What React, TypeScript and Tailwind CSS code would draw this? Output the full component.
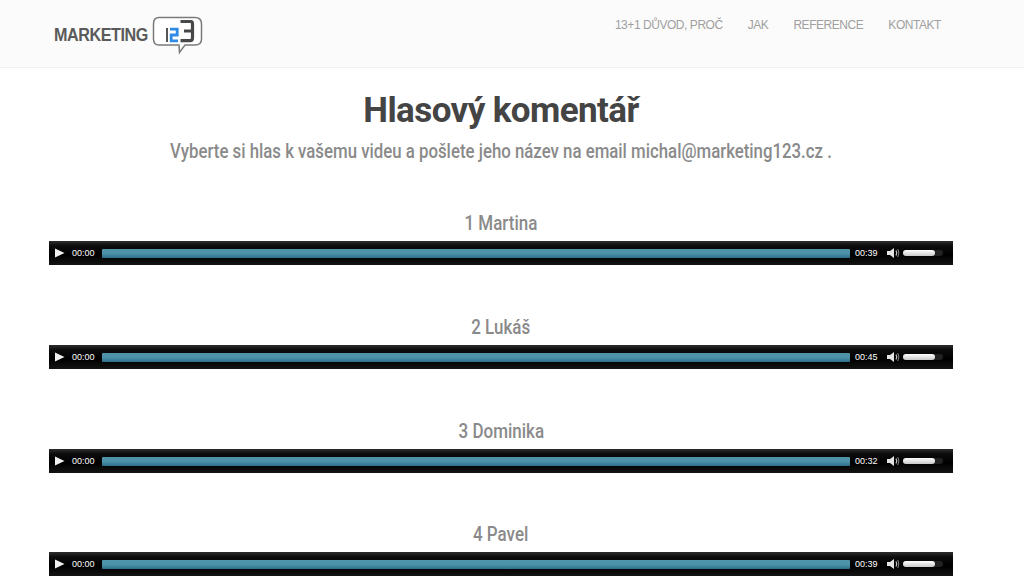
const tracks = [
  { name: "1 Martina", time: "00:39", mt: "mt-0" },
  { name: "2 Lukáš", time: "00:45", mt: "mt-[47px]" },
  { name: "3 Dominika", time: "00:32", mt: "mt-[47px]" },
  { name: "4 Pavel", time: "00:39", mt: "mt-[46px]" },
];

function Player({ time }: { time: string }) {
  return (
    <div className="flex h-6 w-[904px] items-center bg-[linear-gradient(#2e2e2e,#0c0c0c_20%,#000_60%,#141414)] font-['Liberation_Sans',sans-serif] text-[9px] text-white">
      <svg width="10" height="10" viewBox="0 0 10 10" className="ml-[6px]">
        <path d="M0 0.5 L9.5 5 L0 9.5 Z" fill="#f0f0f0" />
      </svg>
      <span className="ml-[7px] mt-px w-[23px]">00:00</span>
      <div className="ml-[7px] h-[9px] w-[748px] rounded-[1px] bg-[linear-gradient(#4f95a9,#4a92a8_50%,#2f7088)]" />
      <span className="ml-[5px] mt-px w-[23px]">{time}</span>
      <svg width="14" height="12" viewBox="0 0 14 12" className="ml-[9px]">
        <path d="M0 4 H3 L7 1 V11 L3 8 H0 Z" fill="#e4e4e4" />
        <path d="M9 3.5 Q10.5 6 9 8.5" stroke="#cccccc" strokeWidth="1.2" fill="none" />
        <path d="M10.8 2 Q13 6 10.8 10" stroke="#888888" strokeWidth="1" fill="none" />
      </svg>
      <div className="ml-[2px] h-[6px] w-10 rounded-sm bg-[#222222]">
        <div className="h-full w-8 rounded-sm bg-[linear-gradient(#ffffff,#c8c8c8)]" />
      </div>
    </div>
  );
}

export default function App() {
  return (
    <div className="h-[576px] w-[1024px] overflow-hidden bg-white font-['Roboto',sans-serif]">
      <header className="flex h-[68px] items-start border-b border-[#f0f0f0] bg-[#fbfbfb]">
        <div className="ml-[54px] mt-[16px] flex items-start">
          <span className="mt-[8px] w-[98px] origin-left scale-x-[0.85] whitespace-nowrap font-['Liberation_Sans',sans-serif] text-[19px] font-bold leading-[22px] tracking-[-0.5px] text-[#5a5a5a]">
            MARKETING
          </span>
          <svg width="52" height="40" viewBox="0 0 52 40">
            <path
              d="M7 1.5 H43 Q49.5 1.5 49.5 8 V23 Q49.5 29 43 29 H33 L27.5 36.5 L27 29 H7 Q1.5 29 1.5 23 V8 Q1.5 1.5 7 1.5 Z"
              fill="#ffffff"
              stroke="#7a7a7a"
              strokeWidth="1.5"
            />
            <rect x="14" y="12" width="2" height="14" fill="#555555" />
            <path d="M18 13.2 H25.2 V19 H19.2 V24.8 H26" fill="none" stroke="#2f8be6" strokeWidth="2.8" />
            <path d="M28.5 5.5 H39 Q40.5 5.5 40.5 8 V22 Q40.5 24.6 38 24.6 H28.5 M32 15 H40" fill="none" stroke="#484848" strokeWidth="3.2" />
          </svg>
        </div>
        <nav className="ml-auto mr-[83px] mt-[17px] flex gap-[25px] font-['Liberation_Sans',sans-serif] text-[12px] leading-[17px] tracking-[-0.45px] text-[#a0a0a0]">
          <span>13+1 DŮVOD, PROČ</span>
          <span>JAK</span>
          <span>REFERENCE</span>
          <span>KONTAKT</span>
        </nav>
      </header>
      <main className="flex w-[1002px] flex-col items-center">
        <h1 className="mt-[20px] text-[35px] font-bold leading-[46px] tracking-[-0.6px] text-[#444444]">
          Hlasový komentář
        </h1>
        <p className="mt-[3px] scale-x-[0.84] whitespace-nowrap text-[20px] font-medium leading-[28px] text-[#8a8a8a]">
          Vyberte si hlas k vašemu videu a pošlete jeho název na email michal@marketing123.cz .
        </p>
        <div className="mt-[43px] flex flex-col items-center">
          {tracks.map((t) => (
            <section key={t.name} className={`flex flex-col items-center ${t.mt}`}>
              <h2 className="mb-[3px] scale-x-[0.85] text-[20px] font-medium leading-[30px] text-[#8a8a8a]">{t.name}</h2>
              <Player time={t.time} />
            </section>
          ))}
        </div>
      </main>
    </div>
  );
}
